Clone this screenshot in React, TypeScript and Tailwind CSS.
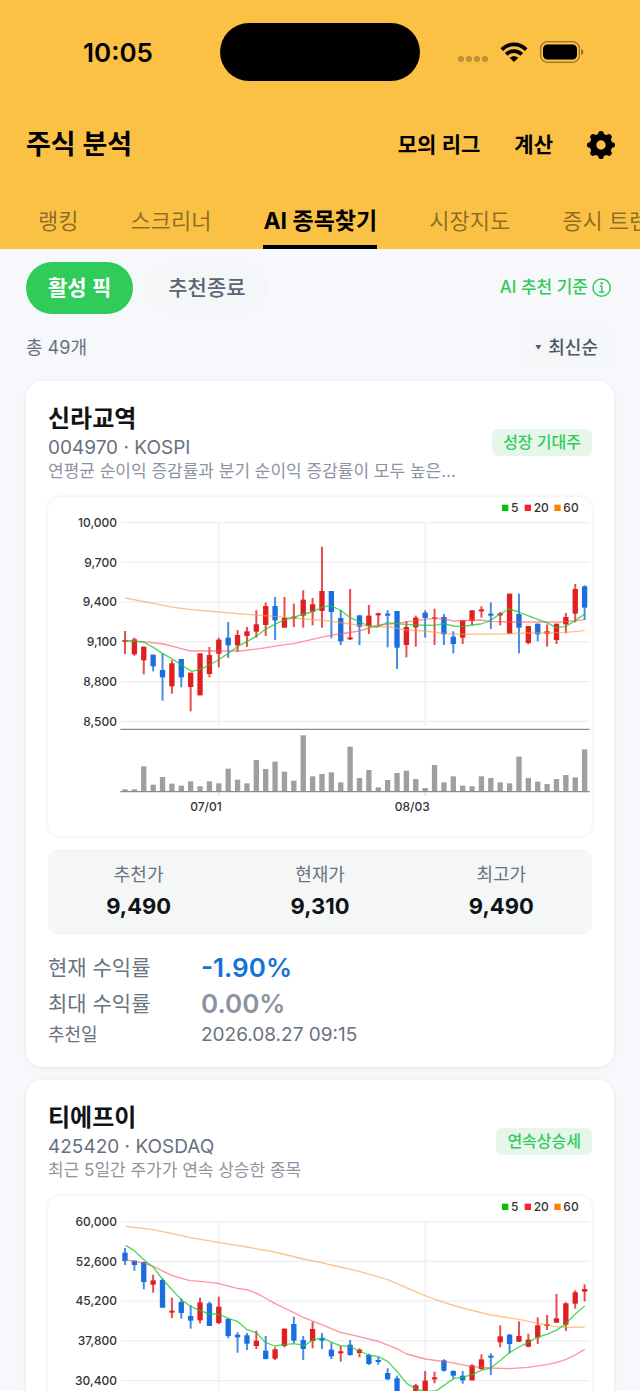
import { useState } from 'react';
import { IoInformationCircleOutline } from 'react-icons/io5';

// ============================================================
// Types & data
// ============================================================

// color, high, body top, body bottom, low (chart units)
type Candle = ['r' | 'b', number, number, number, number];

interface ChartData {
  ticks: string[];
  candles: Candle[];
  volumes: number[];
  ma5: string;
  ma20: string;
  ma60: string;
}

interface Pick {
  name: string;
  code: string;
  market: string;
  desc: string;
  badge: string;
  chart: ChartData;
  prices: { label: string; value: string }[];
  current: string;
  max: string;
  date: string;
}

const TABS = ['랭킹', '스크리너', 'AI 종목찾기', '시장지도', '증시 트렌드'];

const SILLA_CHART: ChartData = {
  ticks: ['10,000', '9,700', '9,400', '9,100', '8,800', '8,500'],
  candles: [
    ['r', 423, 450, 455, 492], ['r', 443, 448, 493, 497], ['r', 470, 470, 511, 553], ['b', 494, 494, 529, 544],
    ['b', 490, 540, 562, 632], ['r', 511, 520, 589, 611], ['b', 507, 507, 562, 592], ['r', 548, 548, 591, 664],
    ['r', 490, 490, 616, 616], ['r', 471, 495, 552, 562], ['r', 443, 449, 491, 532], ['b', 396, 443, 466, 504],
    ['r', 420, 435, 466, 485], ['r', 411, 424, 438, 471], ['r', 361, 403, 425, 443], ['r', 337, 348, 405, 438],
    ['b', 321, 348, 391, 450], ['r', 321, 383, 413, 413], ['r', 341, 380, 386, 411], ['r', 301, 329, 377, 413],
    ['r', 324, 343, 365, 406], ['r', 170, 303, 363, 413], ['b', 303, 303, 366, 445], ['b', 360, 384, 454, 465],
    ['r', 297, 442, 448, 450], ['b', 376, 376, 410, 465], ['r', 345, 377, 408, 432], ['r', 368, 370, 376, 410],
    ['b', 361, 371, 377, 472], ['b', 363, 363, 473, 537], ['r', 393, 411, 465, 502], ['r', 377, 383, 412, 470],
    ['b', 361, 368, 384, 443], ['r', 356, 382, 386, 465], ['b', 372, 381, 433, 465], ['b', 424, 440, 462, 490],
    ['r', 390, 390, 443, 462], ['r', 361, 361, 393, 406], ['r', 349, 358, 364, 383], ['b', 337, 371, 377, 417],
    ['r', 366, 370, 376, 406], ['r', 311, 311, 431, 431], ['b', 311, 372, 413, 490], ['r', 408, 408, 459, 463],
    ['b', 401, 401, 433, 454], ['r', 403, 424, 431, 470], ['r', 401, 401, 450, 462], ['r', 369, 381, 403, 430],
    ['r', 282, 297, 371, 397], ['b', 286, 289, 353, 390],
  ],
  volumes: [
    898, 898, 829, 884, 861, 881, 887, 874, 889, 874, 880, 836, 869, 880, 810, 837, 815, 845, 872, 736, 859, 852, 847,
    877, 770, 864, 840, 892, 870, 849, 842, 867, 894, 825, 877, 859, 887, 889, 859, 864, 877, 880, 800, 864, 875, 882,
    867, 855, 862, 778,
  ],
  ma5: '255,452 283,454 310,456 340,472 367,490 394,505 424,525 455,544 481,538 508,525 535,510 565,490 592,470 620,455 650,438 676,418 704,403 733,390 761,382 790,372 817,366 845,352 870,347 901,360 929,382 958,395 986,408 1013,411 1041,398 1070,401 1097,403 1127,405 1184,406 1211,401 1240,408 1267,410 1296,405 1323,402 1352,391 1380,372 1407,357 1437,366 1464,377 1493,388 1521,398 1548,413 1576,410 1605,392 1634,372',
  ma20: '255,452 310,455 370,462 424,476 451,483 600,483 660,476 720,466 761,461 817,448 870,436 900,432 958,423 1015,405 1070,400 1127,392 1184,385 1211,386 1240,393 1323,390 1352,394 1410,396 1560,396 1610,392 1634,389',
  ma60: '255,324 340,340 400,352 450,358 535,366 620,373 704,379 790,387 870,393 929,402 986,409 1050,411 1097,420 1155,423 1211,430 1250,433 1380,432 1464,429 1576,427 1634,422',
};

const TFE_CHART: ChartData = {
  ticks: ['60,000', '52,600', '45,200', '37,800', '30,400', '23,000'],
  candles: [
    ['b', 177, 191, 216, 228], ['b', 214, 215, 228, 245], ['b', 218, 219, 279, 301], ['r', 257, 274, 287, 311],
    ['b', 268, 273, 356, 357], ['r', 326, 365, 371, 387], ['b', 328, 339, 372, 389], ['b', 349, 381, 395, 419],
    ['r', 326, 340, 394, 403], ['b', 338, 343, 411, 411], ['r', 323, 353, 402, 405], ['b', 388, 390, 441, 448],
    ['b', 430, 437, 445, 491], ['b', 432, 439, 464, 483], ['r', 425, 455, 471, 480], ['b', 441, 485, 510, 511],
    ['r', 475, 481, 509, 513], ['r', 418, 419, 471, 475], ['b', 383, 405, 455, 462], ['b', 441, 453, 480, 513],
    ['r', 398, 420, 456, 478], ['b', 432, 447, 455, 480], ['b', 461, 482, 502, 510], ['r', 470, 487, 493, 518],
    ['b', 453, 467, 498, 500], ['r', 478, 482, 492, 505], ['b', 494, 498, 525, 528], ['b', 503, 513, 519, 527],
    ['b', 538, 552, 571, 573], ['b', 560, 568, 643, 663], ['b', 625, 640, 670, 680], ['r', 585, 589, 645, 655],
    ['r', 546, 575, 633, 640], ['r', 548, 565, 571, 583], ['b', 511, 514, 545, 548], ['b', 544, 546, 560, 569],
    ['b', 546, 560, 574, 584], ['r', 526, 529, 574, 575], ['r', 496, 511, 540, 542], ['b', 493, 500, 506, 558],
    ['r', 409, 442, 460, 475], ['b', 435, 437, 465, 493], ['r', 397, 441, 458, 459], ['r', 434, 452, 473, 475],
    ['r', 385, 409, 446, 465], ['r', 378, 406, 411, 423], ['r', 315, 388, 401, 402], ['r', 340, 343, 407, 426],
    ['r', 304, 310, 344, 359], ['r', 286, 300, 308, 337],
  ],
  volumes: [
    880, 890, 852, 870, 845, 874, 881, 879, 862, 871, 868, 872, 884, 886, 889, 875, 888, 860, 842, 878, 864, 884, 886,
    889, 876, 890, 880, 889, 870, 850, 862, 855, 848, 888, 872, 886, 882, 858, 866, 876, 832, 860, 822, 868, 846, 872,
    798, 826, 842, 861,
  ],
  ma5: '257,169 283,185 310,211 340,235 367,270 394,300 424,332 451,352 481,365 508,375 535,375 565,388 592,397 620,421 650,432 676,460 704,471 733,467 761,464 795,469 820,452 850,447 870,458 901,470 929,472 958,486 986,498 1015,503 1043,517 1070,546 1100,583 1127,599 1155,608 1190,605 1211,590 1240,569 1267,565 1296,557 1323,544 1352,537 1380,515 1407,492 1437,474 1464,461 1493,444 1521,436 1548,424 1576,406 1605,376 1634,351',
  ma20: '255,212 283,217 310,222 340,232 394,259 450,275 481,277 535,283 592,298 620,302 650,313 676,327 704,343 733,357 790,385 845,407 901,430 958,443 1015,457 1070,479 1100,495 1155,510 1230,520 1296,533 1352,537 1407,539 1464,535 1521,527 1548,521 1576,512 1605,498 1634,481',
  ma60: '257,112 340,122 394,133 451,146 535,160 620,174 704,189 790,210 840,220 901,234 958,247 1043,272 1097,295 1155,320 1211,340 1267,357 1352,378 1437,391 1493,403 1548,413 1590,415 1634,414',
};

const PICKS: Pick[] = [
  {
    name: '신라교역',
    code: '004970',
    market: 'KOSPI',
    desc: '연평균 순이익 증감률과 분기 순이익 증감률이 모두 높은...',
    badge: '성장 기대주',
    chart: SILLA_CHART,
    prices: [
      { label: '추천가', value: '9,490' },
      { label: '현재가', value: '9,310' },
      { label: '최고가', value: '9,490' },
    ],
    current: '-1.90%',
    max: '0.00%',
    date: '2026.08.27 09:15',
  },
  {
    name: '티에프이',
    code: '425420',
    market: 'KOSDAQ',
    desc: '최근 5일간 주가가 연속 상승한 종목',
    badge: '연속상승세',
    chart: TFE_CHART,
    prices: [
      { label: '추천가', value: '47,250' },
      { label: '현재가', value: '47,250' },
      { label: '최고가', value: '47,250' },
    ],
    current: '0.00%',
    max: '0.00%',
    date: '2026.08.27 09:15',
  },
];

const COLORS = { r: '#e02020', b: '#1a6fe0' };

const LEGEND = [
  { label: '5', color: '#00c20a', x: 1386 },
  { label: '20', color: '#ff1f2d', x: 1454 },
  { label: '60', color: '#ff8000', x: 1543 },
];

// ============================================================
// Icons
// ============================================================

function WifiIcon() {
  return (
    <svg className="w-7 h-5" viewBox="0 0 28 20" fill="none" stroke="#000" strokeWidth="3.7">
      <path d="M1.8 7.6C8.6 0.6 19.4 0.6 26.2 7.6" />
      <path d="M6.2 12.4C10.6 8 17.4 8 21.8 12.4" />
      <path d="M14 20L9.7 15.8C12.1 13.6 15.9 13.6 18.3 15.8Z" fill="#000" stroke="none" />
    </svg>
  );
}

function BatteryIcon() {
  return (
    <svg className="w-11 h-[22px]" viewBox="0 0 44 22">
      <rect x="0.7" y="0.7" width="38.6" height="20.6" rx="6.5" fill="none" stroke="#000" strokeOpacity="0.4" strokeWidth="1.3" />
      <rect x="3" y="3.4" width="34" height="15.2" rx="4.5" fill="#000" />
      <path d="M41.2 8v6c1.3-.4 2.2-1.6 2.2-3s-.9-2.6-2.2-3z" fill="#000" fillOpacity="0.45" />
    </svg>
  );
}

function GearIcon() {
  return (
    <svg className="w-7 h-7" viewBox="0 0 28 28" fill="none" stroke="#000">
      <circle cx="14" cy="14" r="8" strokeWidth="6.6" />
      {[0, 45, 90, 135].map((deg) => (
        <g key={deg} transform={`rotate(${deg} 14 14)`} strokeWidth="5.6" strokeLinecap="round">
          <path d="M14 2.8v2M14 25.2v-2" />
        </g>
      ))}
    </svg>
  );
}

// ============================================================
// Candle chart with volume bars
// ============================================================

function CandleChart({ data, label }: { data: ChartData; label: string }) {
  const xAt = (i: number) => 255 + i * 28.14;

  return (
    <svg className="block w-full h-auto" viewBox="24 21 1632 1017" role="img" aria-label={label}>
      {LEGEND.map((item) => (
        <g key={item.label}>
          <rect x={item.x} y="44" width="19" height="19" fill={item.color} />
          <text x={item.x + 27} y="66" fontSize="36" fontWeight="500" fill="#333">
            {item.label}
          </text>
        </g>
      ))}

      {data.ticks.map((tick, i) => (
        <g key={tick}>
          <line x1="242" x2="1649" y1={98 + i * 119.2} y2={98 + i * 119.2} stroke="#eceef2" strokeWidth="4" />
          <text x="231" y={111 + i * 119.2} textAnchor="end" fontSize="36" fontWeight="500" fill="#333">
            {tick}
          </text>
        </g>
      ))}
      <path d="M536 98V708M1156 98V708" stroke="#eceef2" strokeWidth="4" />

      {data.candles.map(([color, high, top, bottom, low], i) => (
        <g key={i} fill={COLORS[color]}>
          <rect x={xAt(i) - 3} y={high} width="6" height={low - high} fillOpacity="0.8" />
          <rect x={xAt(i) - 8} y={top} width="16" height={bottom - top} />
        </g>
      ))}

      <g fill="none" strokeWidth="4" strokeLinejoin="round" strokeOpacity="0.6">
        <polyline points={data.ma60} stroke="#ff9a3c" />
        <polyline points={data.ma20} stroke="#ff4d5a" />
        <polyline points={data.ma5} stroke="#14c92a" strokeOpacity="0.75" />
      </g>

      {data.volumes.map((y, i) => (
        <rect key={i} x={xAt(i) - 8} y={y} width="16" height={905 - y} fill="#9f9f9f" />
      ))}
      <path d="M241 718H1649M241 905H1649" stroke="#8a8a8a" strokeWidth="4" />
      <path d="M536 907V917M1156 907V917" stroke="#c9ccd2" strokeWidth="3" />

      <g textAnchor="middle" fontSize="36" fontWeight="500" fill="#333">
        <text x="498" y="963">07/01</text>
        <text x="1117" y="963">08/03</text>
      </g>
    </svg>
  );
}

function PickCard({ pick }: { pick: Pick }) {
  return (
    <article className="rounded-2xl bg-white px-[22px] pt-[23px] pb-[19px] shadow-[0_1px_5px_rgba(20,30,60,0.07)]">
      <div className="flex items-center justify-between gap-3">
        <div className="min-w-0">
          <h2 className="text-[24px] leading-[30px] font-bold text-[#111317]">{pick.name}</h2>
          <p className="text-[19px] leading-[27px] text-[#687080]">
            {pick.code} · {pick.market}
          </p>
          <p className="truncate text-[17px] leading-5 text-[#8d93a0]">{pick.desc}</p>
        </div>
        <span className="shrink-0 rounded-md bg-[#e6f7ea] px-[11px] text-[16px] leading-[27px] font-medium text-[#30cc5a]">
          {pick.badge}
        </span>
      </div>

      <div className="mt-4 overflow-hidden rounded-xl bg-white shadow-[0_0_4px_rgba(20,30,60,0.1)]">
        <CandleChart data={pick.chart} label={`${pick.name} 차트`} />
      </div>

      <dl className="mt-[13px] grid grid-cols-3 rounded-xl bg-[#f5f7f7] py-[14px] text-center">
        {pick.prices.map((price) => (
          <div key={price.label} className="flex flex-col gap-1">
            <dt className="text-[18px] leading-6 text-[#6b7280]">{price.label}</dt>
            <dd className="text-[22px] leading-[30px] font-bold text-[#111317]">{price.value}</dd>
          </div>
        ))}
      </dl>

      <dl className="mt-[15px] grid grid-cols-[153px_1fr] items-center text-[#6b7280]">
        <dt className="text-[21px] leading-9">현재 수익률</dt>
        <dd className="text-[26px] leading-9 font-semibold text-[#1272d6]">{pick.current}</dd>
        <dt className="text-[21px] leading-9">최대 수익률</dt>
        <dd className="text-[26px] leading-9 font-semibold text-[#8b93a1]">{pick.max}</dd>
        <dt className="text-[18px] leading-[26px]">추천일</dt>
        <dd className="text-[19px] leading-[26px]">{pick.date}</dd>
      </dl>
    </article>
  );
}

export default function App() {
  const [activeTab, setActiveTab] = useState('AI 종목찾기');
  const [ended, setEnded] = useState(false);

  const chipOn = 'bg-[#30cc5a] text-white font-semibold';
  const chipOff = 'bg-[#f5f6f8] text-[#5b6474] font-medium';

  return (
    <div className="flex h-screen flex-col overflow-hidden bg-[#f7f8fb] font-['Inter','Noto_Sans_CJK_KR',sans-serif]">
      <header className="shrink-0 bg-[#fbc145] text-black">
        {/* Status Bar */}
        <div className="grid h-[104px] grid-cols-[1fr_200px_1fr] items-center">
          <span className="pt-[2px] pl-4 text-center text-[26px] leading-8 font-semibold">10:05</span>
          <div className="h-[58px] rounded-full bg-black" />
          <div className="flex items-center justify-center gap-3 pr-[18px]">
            <div className="flex gap-[2px] pt-[14px]">
              {[0, 1, 2, 3].map((dot) => (
                <span key={dot} className="h-[6px] w-[6px] rounded-full bg-black/25" />
              ))}
            </div>
            <WifiIcon />
            <BatteryIcon />
          </div>
        </div>

        {/* Title Row */}
        <div className="flex h-20 items-center justify-between pt-[1px] pr-[25px] pl-[26px]">
          <h1 className="text-[27px] leading-9 font-semibold">주식 분석</h1>
          <div className="flex items-center gap-[34px] text-[21px] font-semibold">
            <button>모의 리그</button>
            <button>계산</button>
            <button aria-label="설정">
              <GearIcon />
            </button>
          </div>
        </div>

        {/* Tab Bar */}
        <nav className="flex h-[65px] gap-[52px] overflow-hidden pl-[38px] whitespace-nowrap">
          {TABS.map((tab) => (
            <button
              key={tab}
              onClick={() => setActiveTab(tab)}
              className={`shrink-0 border-b-4 pt-[14px] ${
                activeTab === tab ? 'border-black text-[23px] font-bold' : 'border-transparent text-[22px] text-black/45'
              }`}
            >
              {tab}
            </button>
          ))}
        </nav>
      </header>

      <main className="min-h-0 flex-1 overflow-y-auto px-[26px] [scrollbar-width:none]">
        <div className="flex items-center justify-between pt-[13px]">
          <div className="flex gap-[13px] text-[21px]">
            <button onClick={() => setEnded(false)} className={`h-[52px] rounded-full px-[22px] ${ended ? chipOff : chipOn}`}>
              활성 픽
            </button>
            <button onClick={() => setEnded(true)} className={`h-[52px] rounded-full px-[22px] ${ended ? chipOn : chipOff}`}>
              추천종료
            </button>
          </div>
          <button className="flex items-center gap-[2px] text-[17px] font-medium text-[#30cc5a]">
            AI 추천 기준
            <IoInformationCircleOutline className="h-6 w-6" />
          </button>
        </div>

        <div className="mt-3 flex items-center justify-between">
          <span className="text-[18px] text-[#687080]">총 49개</span>
          <button className="flex h-[42px] items-center gap-[7px] rounded-md bg-[#f5f6f8] px-4 text-[18px] font-medium text-[#4b5563]">
            <span className="text-[6px]">▼</span>
            최신순
          </button>
        </div>

        <div className="mt-[13px] flex flex-col gap-[13px] pb-6">
          {PICKS.map((pick) => (
            <PickCard key={pick.code} pick={pick} />
          ))}
        </div>
      </main>
    </div>
  );
}
